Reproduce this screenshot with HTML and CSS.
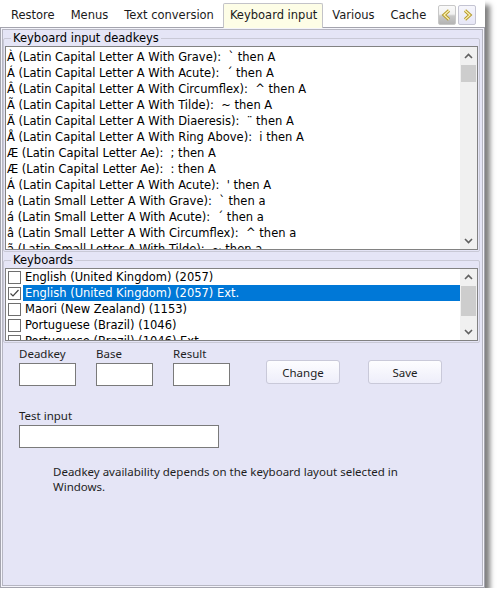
FILE: index.html
```html
<!DOCTYPE html>
<html lang="en">
  <head>
    <meta charset="UTF-8" />
    <title>Keyboard input</title>
    <link rel="stylesheet" href="styles.css">
  </head>
  <body>
    <div class="window">
      <div class="tabstrip">
        <div class="tab">Restore</div>
        <div class="tab">Menus</div>
        <div class="tab">Text conversion</div>
        <div class="tab tab-active">Keyboard input</div>
        <div class="tab">Various</div>
        <div class="tab">Cache</div>
        <div class="tab-scroll">
          <span class="tab-scroll-btn tab-scroll-btn-off">
            <svg width="12" height="12" viewBox="0 0 12 12">
              <polyline points="8,1.5 3,6 8,10.5" fill="none" stroke="#b39a2c" stroke-width="3.2" stroke-linejoin="miter" />
              <polyline points="8,1.5 3,6 8,10.5" fill="none" stroke="#fff3b0" stroke-width="1.2" />
            </svg>
          </span>
          <span class="tab-scroll-btn">
            <svg width="12" height="12" viewBox="0 0 12 12">
              <polyline points="4,1.5 9,6 4,10.5" fill="none" stroke="#b39a2c" stroke-width="3.2" stroke-linejoin="miter" />
              <polyline points="4,1.5 9,6 4,10.5" fill="none" stroke="#fff3b0" stroke-width="1.2" />
            </svg>
          </span>
        </div>
      </div>

      <div class="panel">
        <fieldset class="group">
          <legend>Keyboard input deadkeys</legend>
          <div class="listbox listbox-deadkeys">
            <ul class="rows">
              <li>À (Latin Capital Letter A With Grave):  ` then A</li>
              <li>Á (Latin Capital Letter A With Acute):  ´ then A</li>
              <li>Â (Latin Capital Letter A With Circumflex):  ^ then A</li>
              <li>Ã (Latin Capital Letter A With Tilde):  ~ then A</li>
              <li>Ä (Latin Capital Letter A With Diaeresis):  ¨ then A</li>
              <li>Å (Latin Capital Letter A With Ring Above):  i then A</li>
              <li>Æ (Latin Capital Letter Ae):  ; then A</li>
              <li>Æ (Latin Capital Letter Ae):  : then A</li>
              <li>Á (Latin Capital Letter A With Acute):  ' then A</li>
              <li>à (Latin Small Letter A With Grave):  ` then a</li>
              <li>á (Latin Small Letter A With Acute):  ´ then a</li>
              <li>â (Latin Small Letter A With Circumflex):  ^ then a</li>
              <li>ã (Latin Small Letter A With Tilde):  ~ then a</li>
            </ul>
            <div class="scrollbar">
              <span class="scroll-arrow">
                <svg width="9" height="6" viewBox="0 0 9 6"><polyline points="1,5 4.5,1.5 8,5" fill="none" stroke="#606060" stroke-width="1.6" /></svg>
              </span>
              <span class="scroll-thumb"></span>
              <span class="scroll-track"></span>
              <span class="scroll-arrow">
                <svg width="9" height="6" viewBox="0 0 9 6"><polyline points="1,1 4.5,4.5 8,1" fill="none" stroke="#606060" stroke-width="1.6" /></svg>
              </span>
            </div>
          </div>
        </fieldset>

        <fieldset class="group group-keyboards">
          <legend>Keyboards</legend>
          <div class="listbox listbox-keyboards">
            <ul class="rows">
              <li><span class="check"></span><span class="label">English (United Kingdom) (2057)</span></li>
              <li class="selected">
                <span class="check">
                  <svg width="11" height="11" viewBox="0 0 11 11"><polyline points="1.5,5.5 4,8 9.5,2" fill="none" stroke="#444" stroke-width="1.2" /></svg>
                </span>
                <span class="label">English (United Kingdom) (2057) Ext.</span>
              </li>
              <li><span class="check"></span><span class="label">Maori (New Zealand) (1153)</span></li>
              <li><span class="check"></span><span class="label">Portuguese (Brazil) (1046)</span></li>
              <li><span class="check"></span><span class="label">Portuguese (Brazil) (1046) Ext.</span></li>
            </ul>
            <div class="scrollbar">
              <span class="scroll-arrow">
                <svg width="9" height="6" viewBox="0 0 9 6"><polyline points="1,5 4.5,1.5 8,5" fill="none" stroke="#606060" stroke-width="1.6" /></svg>
              </span>
              <span class="scroll-thumb"></span>
              <span class="scroll-track"></span>
              <span class="scroll-arrow">
                <svg width="9" height="6" viewBox="0 0 9 6"><polyline points="1,1 4.5,4.5 8,1" fill="none" stroke="#606060" stroke-width="1.6" /></svg>
              </span>
            </div>
          </div>
        </fieldset>

        <div class="editor">
          <label class="field">
            <span>Deadkey</span>
            <input type="text" class="textbox" />
          </label>
          <label class="field">
            <span>Base</span>
            <input type="text" class="textbox" />
          </label>
          <label class="field">
            <span>Result</span>
            <input type="text" class="textbox" />
          </label>
          <button class="button button-change">Change</button>
          <button class="button button-save">Save</button>
        </div>

        <label class="field field-test">
          <span>Test input</span>
          <input type="text" class="textbox textbox-wide" />
        </label>

        <p class="note">Deadkey availability depends on the keyboard layout selected in Windows.</p>
      </div>
    </div>
  </body>
</html>
```

FILE: styles.css
```css
body {
  margin: 0px;
  background: white;
  font-family: "DejaVu Sans", sans-serif;
  font-size: 11.5px;
  color: black;
}

.window {
  width: 485px;
  height: 588px;
  display: flex;
  flex-flow: column;
  background: white;
  box-shadow: 5px 5px 5px rgba(0, 0, 0, 0.5);
}

/* tabs */

.tabstrip {
  height: 27px;
  display: flex;
  align-items: flex-end;
  padding-left: 3px;
  position: relative;
  z-index: 1;
}

.tab {
  height: 23px;
  line-height: 22px;
  padding: 0 8px;
  white-space: nowrap;
  color: #1a1a1a;
}

.tab-active {
  height: 24px;
  margin: 0 1px -1px;
  padding: 0 5px 0 6px;
  background: #fdfde6;
  border: 1px solid #c3c3c8;
  border-bottom: none;
  border-radius: 2px 2px 0 0;
}

.tab-scroll {
  display: flex;
  gap: 2px;
  margin: 5px 9px 2px auto;
  align-self: flex-start;
}

.tab-scroll-btn {
  width: 16px;
  height: 18px;
  display: flex;
  align-items: center;
  justify-content: center;
  border: 1px solid #c4c4d2;
  border-radius: 2px;
  background: linear-gradient(#f6f6fc, #e6e6f6);
}

.tab-scroll-btn-off {
  background: linear-gradient(#fafafa 0%, #f0f0f0 45%, #c8c8c8 55%, #b4b4b4 100%);
  border-color: #c8c8c8;
}

/* panel */

.panel {
  flex: 1;
  background: #e5e5f6;
  border: 1px solid #a4a4ae;
  box-shadow: inset 0 0 0 1px #f4f4fb, inset 0 0 0 2px #b6b6c2;
  padding: 3px 4px 0 2px;
  display: flex;
  flex-flow: column;
}

.group {
  margin: 0px;
  padding: 0 1px 1px;
  border: 1px solid #c9c9d6;
  border-radius: 2px;
  min-width: 0;
}

.group legend {
  padding: 0 2px;
  margin-left: 6px;
  line-height: 14px;
}

.group-keyboards {
  margin-top: 1px;
}

.listbox {
  display: flex;
  background: white;
  border: 1px solid #828282;
  margin-top: 1px;
}

.listbox-deadkeys {
  height: 202px;
}

.listbox-keyboards {
  height: 71px;
}

.rows {
  flex: 1;
  margin: 0px;
  padding: 2px 0 0;
  list-style: none;
  overflow: hidden;

  > li {
    height: 16px;
    line-height: 16px;
    white-space: pre;
    padding-left: 1px;
  }
}

.listbox-keyboards .rows {
  padding-top: 0px;

  > li {
    display: flex;
    align-items: center;
    padding-left: 2px;
  }

  .label {
    padding: 0 2px;
    line-height: 16px;
    flex: 1;
  }

  .selected .label {
    background: #0078d7;
    color: white;
  }
}

.check {
  width: 11px;
  height: 11px;
  border: 1px solid #6e6e6e;
  background: white;
  margin-right: 2px;
  display: flex;
}

.scrollbar {
  width: 17px;
  background: #f0f0f0;
  display: flex;
  flex-flow: column;
}

.scroll-arrow {
  height: 17px;
  flex: none;
  display: flex;
  align-items: center;
  justify-content: center;
}

.scroll-thumb {
  height: 17px;
  margin: 1px 1px 0;
  background: #cdcdcd;
}

.listbox-keyboards .scroll-arrow {
  height: 16px;
}

.listbox-keyboards .scroll-thumb {
  height: 30px;
}

.scroll-track {
  flex: 1;
}

/* editor */

.editor,
.field-test,
.note {
  font-family: "Noto Sans", "Open Sans", sans-serif;
  font-size: 11.5px;
  color: #1e1e1e;
}

.editor {
  display: flex;
  gap: 20px;
  padding-left: 16px;
  margin-top: 3px;
}

.field {
  display: flex;
  flex-flow: column;
  gap: 2px;
  line-height: 15px;
}

.textbox {
  width: 57px;
  height: 23px;
  box-sizing: border-box;
  margin: 0px;
  border: 1px solid #7a7a7a;
  background: white;
}

.textbox-wide {
  width: 200px;
}

.button {
  width: 74px;
  height: 24px;
  margin-top: 14px;
  border: 1px solid #c9c9d9;
  border-radius: 3px;
  background: linear-gradient(#fdfdff, #eeeefa);
  font: inherit;
  color: #1e1e1e;
}

.button-change {
  margin-left: 16px;
}

.button-save {
  margin-left: 8px;
}

.field-test {
  margin: 22px 0 0 16px;
}

.note {
  margin: 16px 0 0 50px;
  width: 350px;
  line-height: 15px;
}
```
